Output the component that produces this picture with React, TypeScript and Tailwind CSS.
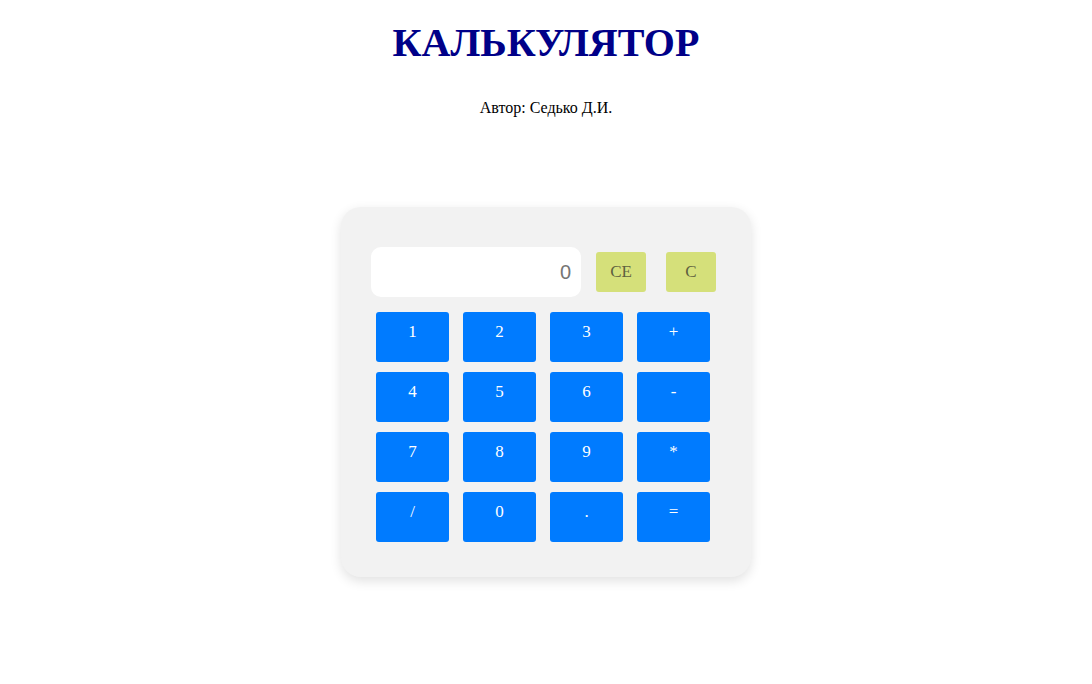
const keys = ['1', '2', '3', '+', '4', '5', '6', '-', '7', '8', '9', '*', '/', '0', '.', '=']

export default function App() {
  return (
    <div className="min-h-screen bg-white font-['Liberation_Serif',serif] text-black">
      <h1 className="pt-[19px] text-center text-[40px] font-bold leading-[48px] text-[#000088]">
        КАЛЬКУЛЯТОР
      </h1>
      <p className="mt-[32px] text-center text-[16px] leading-[18px]">Автор: Седько Д.И.</p>

      {/* Panel */}
      <div className="mx-auto mt-[90px] w-[410px] rounded-[20px] bg-[#f2f2f2] pb-[35px] pl-[30px] pr-[35px] pt-[40px] shadow-[0_4px_12px_rgba(0,0,0,0.12)]">
        <div className="flex items-center">
          <div className="flex h-[50px] w-[210px] items-center justify-end rounded-[10px] bg-white pr-[10px] font-['Liberation_Sans',sans-serif] text-[20px] text-[#757575]">
            0
          </div>
          <button className="ml-[15px] h-[40px] w-[50px] rounded-[3px] bg-[#d5e07a] text-[17px] text-[#5f6140]">
            CE
          </button>
          <button className="ml-[20px] h-[40px] w-[50px] rounded-[3px] bg-[#d5e07a] text-[17px] text-[#5f6140]">
            C
          </button>
        </div>

        <div className="ml-[5px] mt-[15px] grid grid-cols-[repeat(4,73px)] gap-x-[14px] gap-y-[10px]">
          {keys.map((k) => (
            <button
              key={k}
              className="flex h-[50px] items-start justify-center rounded-[3px] bg-[#007bff] pt-[10px] text-[17px] leading-[20px] text-white"
            >
              {k}
            </button>
          ))}
        </div>
      </div>
    </div>
  )
}
